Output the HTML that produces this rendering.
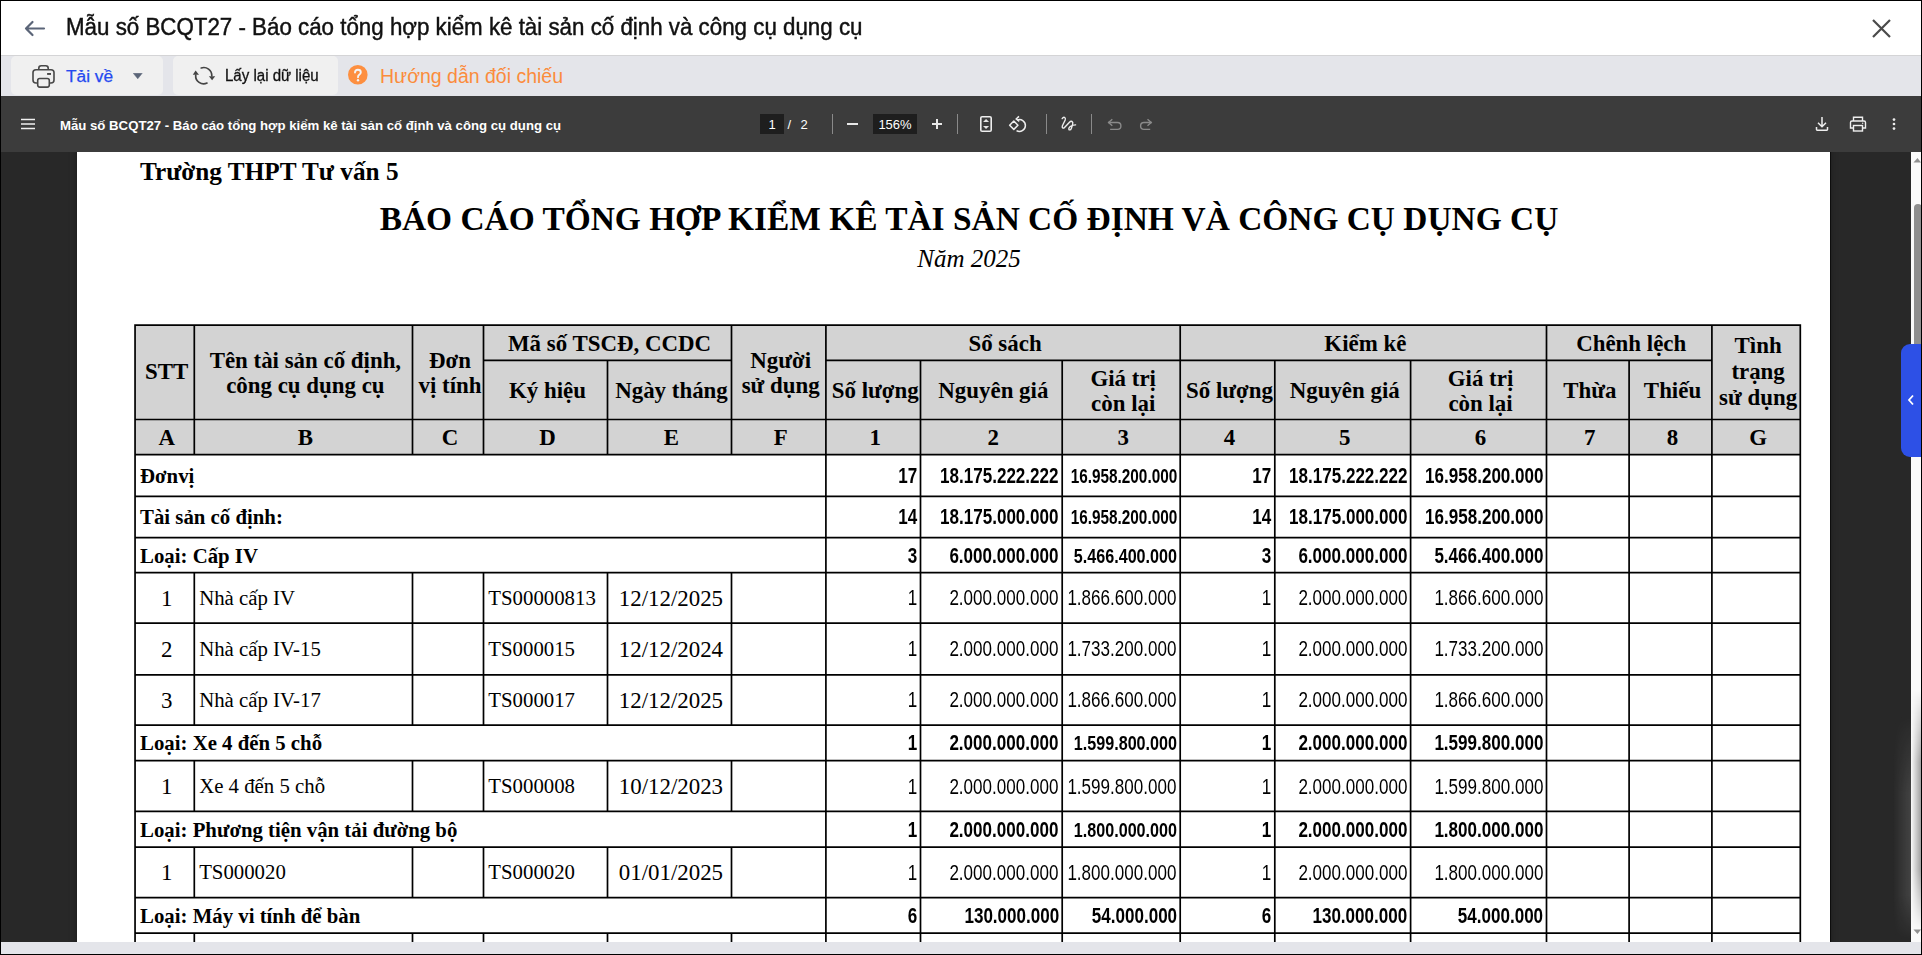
<!DOCTYPE html><html><head><meta charset="utf-8"><style>
*{margin:0;padding:0;box-sizing:border-box}
html,body{width:1922px;height:955px;overflow:hidden;background:#000}
body{position:relative;font-family:'Liberation Sans', sans-serif}
.abs{position:absolute}
.ln{position:absolute;background:#1a1a1a}
.c{position:absolute;display:flex;align-items:center;white-space:nowrap;overflow:visible;color:#000}
.hb{font:bold 22.9px/25.4px 'Liberation Serif', serif}
.rb{font:bold 20.8px/24px 'Liberation Serif', serif}
.rr{font:20.8px/24px 'Liberation Serif', serif}
.rd{font:22.9px/24px 'Liberation Serif', serif}
.n{display:inline-block;font-family:'Liberation Sans', sans-serif;transform:scaleX(0.782);transform-origin:right center}
.nb{font-weight:bold}
</style></head><body>
<div class="abs" style="left:1px;top:1px;width:1920px;height:54px;background:#fff"></div>
<div class="abs" style="left:1px;top:55px;width:1920px;height:41px;background:#e4e5ea;border-top:1px solid #d4d4d6"></div>
<div class="abs" style="left:1px;top:96px;width:1920px;height:56px;background:#3c3c3c"></div>
<div class="abs" style="left:1px;top:152px;width:1910px;height:790px;background:#282828;overflow:hidden" id="viewer">
<div class="abs" style="left:76px;top:-10px;width:1753px;height:810px;background:#fff;box-shadow:0 0 1px 0.5px rgba(0,0,0,0.6),0 0 7px 1px rgba(0,0,0,0.25)"></div>
</div>
<div class="abs" style="left:1911px;top:152px;width:10px;height:790px;background:#fafafa"></div>
<div class="abs" style="left:1px;top:942px;width:1920px;height:12px;background:#e4e5ea"></div>
<svg class="abs" style="left:22px;top:18px" width="24" height="20" viewBox="0 0 24 20"><path d="M22 10.5H4 M10.5 4L4 10.5L10.5 17" fill="none" stroke="#5b6578" stroke-width="2.2" stroke-linecap="round" stroke-linejoin="round"/></svg>
<div class="abs" style="left:66px;top:12.8px;font:23.5px/28px 'Liberation Sans', sans-serif;color:#111;white-space:nowrap;transform:scaleX(0.95);transform-origin:left top;-webkit-text-stroke:0.45px #111">Mẫu số BCQT27 - Báo cáo tổng hợp kiểm kê tài sản cố định và công cụ dụng cụ</div>
<svg class="abs" style="left:1870px;top:17px" width="22" height="22" viewBox="0 0 22 22"><path d="M3 3L20 20M20 3L3 20" stroke="#4a4a4a" stroke-width="2.2"/></svg>
<div class="abs" style="left:11px;top:56px;width:152px;height:39px;background:#f0f0f0;border-radius:5px"></div>
<div class="abs" style="left:173px;top:56px;width:165px;height:39px;background:#f0f0f0;border-radius:5px"></div>
<svg class="abs" style="left:26px;top:60px" width="40" height="32" viewBox="0 0 40 32"><g fill="none" stroke="#484848" stroke-width="1.6" stroke-linejoin="round"><path d="M12.8 9.6V8.2Q12.8 5.8 15.2 5.8H19.8Q22.2 5.8 22.2 8.2V9.6"/><path d="M11.6 23H10Q7 23 7 20V12.6Q7 9.7 10 9.7H25Q28 9.7 28 12.6V20Q28 23 25 23H23.4"/><rect x="11.7" y="18.5" width="11.6" height="8.6" rx="2"/></g><rect x="21.1" y="13" width="3.9" height="1.9" fill="#484848"/></svg>
<div class="abs" style="left:66px;top:64.6px;font:17.3px/22px 'Liberation Sans', sans-serif;color:#2449ef;white-space:nowrap;-webkit-text-stroke:0.25px #2449ef">Tải về</div>
<svg class="abs" style="left:133px;top:73px" width="10" height="7" viewBox="0 0 10 7"><path d="M0.3 0.3H9.2L4.75 5.8Z" fill="#5b6578" stroke="#5b6578" stroke-width="0.5" stroke-linejoin="round"/></svg>
<svg class="abs" style="left:186px;top:60px" width="40" height="32" viewBox="0 0 40 32"><g fill="none" stroke="#444" stroke-width="1.7" stroke-linecap="round"><path d="M15.2 8.0A8 8 0 0 1 25.8 15.8"/><path d="M9.7 15.2A8 8 0 0 0 21 23.1"/></g><path d="M22.9 16.2H29.2L26.1 20.3Z" fill="#444"/><path d="M6.8 14.8H13L9.6 10.6Z" fill="#444"/></svg>
<div class="abs" style="left:225px;top:65.5px;font:16px/20px 'Liberation Sans', sans-serif;color:#111;white-space:nowrap;transform:scaleX(0.94);transform-origin:left top;-webkit-text-stroke:0.3px #111">Lấy lại dữ liệu</div>
<svg class="abs" style="left:348px;top:65px" width="20" height="20" viewBox="0 0 20 20"><circle cx="9.8" cy="9.8" r="9.8" fill="#fd8f40"/><path d="M7 7.6Q7 4.8 9.9 4.8Q12.8 4.8 12.8 7.3Q12.8 8.8 11.2 9.8Q10 10.6 10 12.2" fill="none" stroke="#f4f4f4" stroke-width="1.9" stroke-linecap="round"/><circle cx="10" cy="15.2" r="1.2" fill="#f4f4f4"/></svg>
<div class="abs" style="left:380px;top:63.8px;font:19.5px/24px 'Liberation Sans', sans-serif;color:#fb8c3c;white-space:nowrap">Hướng dẫn đối chiếu</div>
<svg class="abs" style="left:20px;top:118px" width="16" height="12" viewBox="0 0 16 12"><path d="M1 1.5H15M1 6H15M1 10.5H15" stroke="#f0f0f0" stroke-width="1.6"/></svg>
<div class="abs" style="left:60px;top:117px;font:bold 13.2px/18px 'Liberation Sans', sans-serif;color:#fff;white-space:nowrap">Mẫu số BCQT27 - Báo cáo tổng hợp kiểm kê tài sản cố định và công cụ dụng cụ</div>
<div class="abs" style="left:760px;top:114px;width:24px;height:20px;background:#1e1e1e"></div>
<div class="abs" style="left:760px;top:116px;width:24px;font:13px/18px 'Liberation Sans', sans-serif;color:#fff;text-align:center">1</div>
<div class="abs" style="left:787.5px;top:116px;font:13px/18px 'Liberation Sans', sans-serif;color:#fff;white-space:nowrap">/</div>
<div class="abs" style="left:800.5px;top:116px;font:13px/18px 'Liberation Sans', sans-serif;color:#fff;white-space:nowrap">2</div>
<div class="abs" style="left:832px;top:114px;width:1px;height:20px;background:#8a8a8a"></div>
<div class="abs" style="left:847px;top:123px;width:11px;height:2px;background:#e8e8e8"></div>
<div class="abs" style="left:873px;top:114px;width:44px;height:20px;background:#1e1e1e"></div>
<div class="abs" style="left:873px;top:116px;width:44px;font:13px/18px 'Liberation Sans', sans-serif;color:#fff;text-align:center">156%</div>
<svg class="abs" style="left:931px;top:118px" width="12" height="12" viewBox="0 0 12 12"><path d="M6 1V11M1 6H11" stroke="#e8e8e8" stroke-width="2"/></svg>
<div class="abs" style="left:957px;top:114px;width:1px;height:20px;background:#8a8a8a"></div>
<svg class="abs" style="left:979px;top:115px" width="14" height="18" viewBox="0 0 14 18"><rect x="1.8" y="1.75" width="10.4" height="14.5" rx="1.3" fill="none" stroke="#eee" stroke-width="1.6"/><path d="M4 7.05L7.05 4.1L10.1 7.05Z M4 11L10.1 11L7.05 13.9Z" fill="#e6e6e6"/></svg>
<svg class="abs" style="left:1008px;top:115px" width="20" height="19" viewBox="0 0 20 19"><path d="M1.65 10.2L5.8 6.05L9.95 10.2L5.8 14.35Z" fill="none" stroke="#eee" stroke-width="1.5" stroke-linejoin="round"/><path d="M8.55 15.6A5.9 5.9 0 1 0 9.0 5.15" fill="none" stroke="#eee" stroke-width="1.5"/><path d="M11 1.4L8.1 4.0L11.3 6.3" fill="none" stroke="#eee" stroke-width="1.5" stroke-linejoin="round"/></svg>
<div class="abs" style="left:1046px;top:114px;width:1px;height:20px;background:#8a8a8a"></div>
<svg class="abs" style="left:1056px;top:112px" width="24" height="24" viewBox="0 0 24 24"><path d="M6.2 6.6C7.5 4.5 10 5 9.2 8L6.4 13.8C5.6 15.8 7.2 16.8 8.5 15.5L13.5 10.2C15 8.6 17.6 9.2 16.6 12.4L15.4 16.2C14.6 18.6 12.2 18.4 13 16C13.6 14.4 16.5 13.2 19.6 12.9" fill="none" stroke="#eee" stroke-width="1.4" stroke-linecap="round" stroke-linejoin="round"/></svg>
<div class="abs" style="left:1091px;top:114px;width:1px;height:20px;background:#8a8a8a"></div>
<svg class="abs" style="left:1106px;top:117px" width="16" height="14" viewBox="0 0 16 14"><path d="M2 5.55H11.5A3.4 3.4 0 0 1 11.5 12.35H4.1" fill="none" stroke="#8a8a8a" stroke-width="1.4"/><path d="M6.3 2.3L2.6 5.55L6.3 8.8" fill="none" stroke="#8a8a8a" stroke-width="1.4"/></svg>
<svg class="abs" style="left:1138px;top:117px" width="16" height="14" viewBox="0 0 16 14"><path d="M13.8 5.55H6A3.4 3.4 0 0 0 6 12.35H12.2" fill="none" stroke="#8a8a8a" stroke-width="1.4"/><path d="M9.5 2.3L13.2 5.55L9.5 8.8" fill="none" stroke="#8a8a8a" stroke-width="1.4"/></svg>
<svg class="abs" style="left:1814px;top:116px" width="16" height="16" viewBox="0 0 16 16"><path d="M8 1V10.5M4 6.8L8 10.8L12 6.8" fill="none" stroke="#eee" stroke-width="1.5"/><path d="M2.5 11V13.6Q2.5 14.3 3.2 14.3H12.8Q13.5 14.3 13.5 13.6V11" fill="none" stroke="#eee" stroke-width="1.5"/></svg>
<svg class="abs" style="left:1849px;top:116px" width="18" height="16" viewBox="0 0 18 16"><path d="M4.5 5V1.2H13.5V5" fill="none" stroke="#eee" stroke-width="1.4"/><path d="M4.5 12H1.5V6.5Q1.5 5 3 5H15Q16.5 5 16.5 6.5V12H13.5" fill="none" stroke="#eee" stroke-width="1.4"/><rect x="4.5" y="9.5" width="9" height="5.5" fill="none" stroke="#eee" stroke-width="1.4"/><circle cx="13.7" cy="7.3" r="0.7" fill="#eee"/></svg>
<svg class="abs" style="left:1891px;top:116px" width="6" height="16" viewBox="0 0 6 16"><circle cx="3" cy="3.6" r="1.35" fill="#eee"/><circle cx="3" cy="8" r="1.35" fill="#eee"/><circle cx="3" cy="12.6" r="1.35" fill="#eee"/></svg>
<svg class="abs" style="left:1913px;top:157px" width="8" height="6" viewBox="0 0 8 6"><path d="M0.5 5.5L4.5 1L8 5.5Z" fill="#8f8f8f"/></svg>
<div class="abs" style="left:1914px;top:204px;width:8px;height:200px;background:#8f8f8f;border-radius:4px 4px 0 0"></div>
<div class="abs" style="left:1911px;top:690px;width:10px;height:240px;background:linear-gradient(to right,#fafafa,#a0a0a0);-webkit-mask-image:linear-gradient(to bottom,transparent,#000 30%,#000 75%,transparent)"></div>
<div class="abs" style="left:1893px;top:715px;width:18px;height:225px;background:linear-gradient(to right,rgba(255,255,255,0),rgba(255,255,255,0.13));-webkit-mask-image:linear-gradient(to bottom,transparent,#000 35%,#000 80%,transparent)"></div>
<svg class="abs" style="left:1913px;top:929px" width="8" height="6" viewBox="0 0 8 6"><path d="M0.5 0.5L4.5 5L8 0.5Z" fill="#8f8f8f"/></svg>
<div class="abs" style="left:1901px;top:344px;width:21px;height:113px;background:#2d50e6;border-radius:9px 0 0 9px"></div>
<svg class="abs" style="left:1906px;top:394px" width="10" height="12" viewBox="0 0 10 12"><path d="M7 1.5L3 6L7 10.5" fill="none" stroke="#fff" stroke-width="1.8"/></svg>
<div class="abs" style="left:0;top:0;width:1922px;height:942px;overflow:hidden;pointer-events:none">
<div class="abs" style="left:77px;top:152px;width:1753px;height:790px;overflow:hidden">
<div class="abs" style="left:-77px;top:-152px;width:1922px;height:1100px">
<div class="abs" style="left:140px;top:156px;font:bold 25.25px/30px 'Liberation Serif', serif;white-space:nowrap">Trường THPT Tư vấn 5</div>
<div class="abs" style="left:169px;top:199px;width:1600px;text-align:center;font:bold 33.42px/40px 'Liberation Serif', serif;white-space:nowrap">BÁO CÁO TỔNG HỢP KIỂM KÊ TÀI SẢN CỐ ĐỊNH VÀ CÔNG CỤ DỤNG CỤ</div>
<div class="abs" style="left:769px;top:243.5px;width:400px;text-align:center;font:italic 25px/30px 'Liberation Serif', serif;white-space:nowrap">Năm 2025</div>
<div class="abs" style="left:135.05px;top:325.1px;width:1665.25px;height:129.5px;background:#d3d3d3"></div>
<div class="c hb" style="left:135.9px;top:325.45000000000005px;width:57.55000000000001px;height:92.69999999999993px;justify-content:center;padding:0 4px 0 8px;text-align:center;">STT</div>
<div class="c hb" style="left:195.15px;top:326.95000000000005px;width:216.49999999999997px;height:92.69999999999993px;justify-content:center;padding:0 4px 0 8px;text-align:center;">Tên tài sản cố định,<br>công cụ dụng cụ</div>
<div class="c hb" style="left:413.35px;top:326.95000000000005px;width:69.29999999999995px;height:92.69999999999993px;justify-content:center;padding:0 0px 0 4px;text-align:center;">Đơn<br>vị tính</div>
<div class="c hb" style="left:484.35px;top:326.95000000000005px;width:246.29999999999995px;height:33.59999999999991px;justify-content:center;padding:0 4px 0 8px;text-align:center;">Mã số TSCĐ, CCDC</div>
<div class="c hb" style="left:484.35px;top:362.25px;width:122.29999999999995px;height:57.39999999999998px;justify-content:center;padding:0 4px 0 8px;text-align:center;">Ký hiệu</div>
<div class="c hb" style="left:608.35px;top:362.25px;width:122.29999999999995px;height:57.39999999999998px;justify-content:center;padding:0 0px 0 4px;text-align:center;">Ngày tháng</div>
<div class="c hb" style="left:732.35px;top:326.95000000000005px;width:92.69999999999993px;height:92.69999999999993px;justify-content:center;padding:0 0px 0 4px;text-align:center;">Người<br>sử dụng</div>
<div class="c hb" style="left:826.75px;top:326.95000000000005px;width:352.60000000000014px;height:33.59999999999991px;justify-content:center;padding:0 4px 0 8px;text-align:center;">Sổ sách</div>
<div class="c hb" style="left:826.75px;top:362.25px;width:92.89999999999998px;height:57.39999999999998px;justify-content:center;padding:0 0px 0 4px;text-align:center;">Số lượng</div>
<div class="c hb" style="left:921.35px;top:362.25px;width:140.0000000000001px;height:57.39999999999998px;justify-content:center;padding:0 4px 0 8px;text-align:center;">Nguyên giá</div>
<div class="c hb" style="left:1063.05px;top:362.25px;width:116.30000000000018px;height:57.39999999999998px;justify-content:center;padding:0 4px 0 8px;text-align:center;">Giá trị<br>còn lại</div>
<div class="c hb" style="left:1181.05px;top:326.95000000000005px;width:364.60000000000014px;height:33.59999999999991px;justify-content:center;padding:0 4px 0 8px;text-align:center;">Kiểm kê</div>
<div class="c hb" style="left:1181.05px;top:362.25px;width:92.90000000000009px;height:57.39999999999998px;justify-content:center;padding:0 0px 0 4px;text-align:center;">Số lượng</div>
<div class="c hb" style="left:1275.6499999999999px;top:362.25px;width:134.10000000000014px;height:57.39999999999998px;justify-content:center;padding:0 4px 0 8px;text-align:center;">Nguyên giá</div>
<div class="c hb" style="left:1411.4499999999998px;top:362.25px;width:134.20000000000027px;height:57.39999999999998px;justify-content:center;padding:0 4px 0 8px;text-align:center;">Giá trị<br>còn lại</div>
<div class="c hb" style="left:1547.35px;top:326.95000000000005px;width:163.70000000000027px;height:33.59999999999991px;justify-content:center;padding:0 4px 0 8px;text-align:center;">Chênh lệch</div>
<div class="c hb" style="left:1547.35px;top:362.25px;width:80.90000000000009px;height:57.39999999999998px;justify-content:center;padding:0 4px 0 8px;text-align:center;">Thừa</div>
<div class="c hb" style="left:1629.9499999999998px;top:362.25px;width:81.10000000000036px;height:57.39999999999998px;justify-content:center;padding:0 4px 0 8px;text-align:center;">Thiếu</div>
<div class="c hb" style="left:1712.75px;top:325.95000000000005px;width:86.70000000000005px;height:92.69999999999993px;justify-content:center;padding:0 0px 0 4px;text-align:center;line-height:26.4px">Tình<br>trạng<br>sử dụng</div>
<div class="c hb" style="left:135.9px;top:421.35px;width:57.55000000000001px;height:33.39999999999998px;justify-content:center;padding:0 4px 0 8px;text-align:center;">A</div>
<div class="c hb" style="left:195.15px;top:421.35px;width:216.49999999999997px;height:33.39999999999998px;justify-content:center;padding:0 4px 0 8px;text-align:center;">B</div>
<div class="c hb" style="left:413.35px;top:421.35px;width:69.29999999999995px;height:33.39999999999998px;justify-content:center;padding:0 4px 0 8px;text-align:center;">C</div>
<div class="c hb" style="left:484.35px;top:421.35px;width:122.29999999999995px;height:33.39999999999998px;justify-content:center;padding:0 4px 0 8px;text-align:center;">D</div>
<div class="c hb" style="left:608.35px;top:421.35px;width:122.29999999999995px;height:33.39999999999998px;justify-content:center;padding:0 4px 0 8px;text-align:center;">E</div>
<div class="c hb" style="left:732.35px;top:421.35px;width:92.69999999999993px;height:33.39999999999998px;justify-content:center;padding:0 4px 0 8px;text-align:center;">F</div>
<div class="c hb" style="left:826.75px;top:421.35px;width:92.89999999999998px;height:33.39999999999998px;justify-content:center;padding:0 4px 0 8px;text-align:center;">1</div>
<div class="c hb" style="left:921.35px;top:421.35px;width:140.0000000000001px;height:33.39999999999998px;justify-content:center;padding:0 4px 0 8px;text-align:center;">2</div>
<div class="c hb" style="left:1063.05px;top:421.35px;width:116.30000000000018px;height:33.39999999999998px;justify-content:center;padding:0 4px 0 8px;text-align:center;">3</div>
<div class="c hb" style="left:1181.05px;top:421.35px;width:92.90000000000009px;height:33.39999999999998px;justify-content:center;padding:0 4px 0 8px;text-align:center;">4</div>
<div class="c hb" style="left:1275.6499999999999px;top:421.35px;width:134.10000000000014px;height:33.39999999999998px;justify-content:center;padding:0 4px 0 8px;text-align:center;">5</div>
<div class="c hb" style="left:1411.4499999999998px;top:421.35px;width:134.20000000000027px;height:33.39999999999998px;justify-content:center;padding:0 4px 0 8px;text-align:center;">6</div>
<div class="c hb" style="left:1547.35px;top:421.35px;width:80.90000000000009px;height:33.39999999999998px;justify-content:center;padding:0 4px 0 8px;text-align:center;">7</div>
<div class="c hb" style="left:1629.9499999999998px;top:421.35px;width:81.10000000000036px;height:33.39999999999998px;justify-content:center;padding:0 4px 0 8px;text-align:center;">8</div>
<div class="c hb" style="left:1712.75px;top:421.35px;width:86.70000000000005px;height:33.39999999999998px;justify-content:center;padding:0 4px 0 8px;text-align:center;">G</div>
<div class="c rb" style="left:135.9px;top:455.95000000000005px;width:689.15px;height:39.99999999999994px;justify-content:flex-start;padding:0 4.2px 0 4.2px;text-align:left;">Đơnvị</div>
<div class="c rb" style="left:826.75px;top:455.95000000000005px;width:92.89999999999998px;height:39.99999999999994px;justify-content:flex-end;padding:0 2.5px 0 2.5px;text-align:right;"><span class="n nb" style="font-size:21.80px">17</span></div>
<div class="c rb" style="left:921.35px;top:455.95000000000005px;width:140.0000000000001px;height:39.99999999999994px;justify-content:flex-end;padding:0 2.5px 0 2.5px;text-align:right;"><span class="n nb" style="font-size:21.80px">18.175.222.222</span></div>
<div class="c rb" style="left:1063.05px;top:455.95000000000005px;width:116.30000000000018px;height:39.99999999999994px;justify-content:flex-end;padding:0 2.5px 0 2.5px;text-align:right;"><span class="n nb" style="font-size:19.60px">16.958.200.000</span></div>
<div class="c rb" style="left:1181.05px;top:455.95000000000005px;width:92.90000000000009px;height:39.99999999999994px;justify-content:flex-end;padding:0 2.5px 0 2.5px;text-align:right;"><span class="n nb" style="font-size:21.80px">17</span></div>
<div class="c rb" style="left:1275.6499999999999px;top:455.95000000000005px;width:134.10000000000014px;height:39.99999999999994px;justify-content:flex-end;padding:0 2.5px 0 2.5px;text-align:right;"><span class="n nb" style="font-size:21.80px">18.175.222.222</span></div>
<div class="c rb" style="left:1411.4499999999998px;top:455.95000000000005px;width:134.20000000000027px;height:39.99999999999994px;justify-content:flex-end;padding:0 2.5px 0 2.5px;text-align:right;"><span class="n nb" style="font-size:21.80px">16.958.200.000</span></div>
<div class="c rb" style="left:135.9px;top:497.65000000000003px;width:689.15px;height:39.599999999999966px;justify-content:flex-start;padding:0 4.2px 0 4.2px;text-align:left;">Tài sản cố định:</div>
<div class="c rb" style="left:826.75px;top:497.65000000000003px;width:92.89999999999998px;height:39.599999999999966px;justify-content:flex-end;padding:0 2.5px 0 2.5px;text-align:right;"><span class="n nb" style="font-size:21.80px">14</span></div>
<div class="c rb" style="left:921.35px;top:497.65000000000003px;width:140.0000000000001px;height:39.599999999999966px;justify-content:flex-end;padding:0 2.5px 0 2.5px;text-align:right;"><span class="n nb" style="font-size:21.80px">18.175.000.000</span></div>
<div class="c rb" style="left:1063.05px;top:497.65000000000003px;width:116.30000000000018px;height:39.599999999999966px;justify-content:flex-end;padding:0 2.5px 0 2.5px;text-align:right;"><span class="n nb" style="font-size:19.60px">16.958.200.000</span></div>
<div class="c rb" style="left:1181.05px;top:497.65000000000003px;width:92.90000000000009px;height:39.599999999999966px;justify-content:flex-end;padding:0 2.5px 0 2.5px;text-align:right;"><span class="n nb" style="font-size:21.80px">14</span></div>
<div class="c rb" style="left:1275.6499999999999px;top:497.65000000000003px;width:134.10000000000014px;height:39.599999999999966px;justify-content:flex-end;padding:0 2.5px 0 2.5px;text-align:right;"><span class="n nb" style="font-size:21.80px">18.175.000.000</span></div>
<div class="c rb" style="left:1411.4499999999998px;top:497.65000000000003px;width:134.20000000000027px;height:39.599999999999966px;justify-content:flex-end;padding:0 2.5px 0 2.5px;text-align:right;"><span class="n nb" style="font-size:21.80px">16.958.200.000</span></div>
<div class="c rb" style="left:135.9px;top:538.95px;width:689.15px;height:33.39999999999998px;justify-content:flex-start;padding:0 4.2px 0 4.2px;text-align:left;">Loại: Cấp IV</div>
<div class="c rb" style="left:826.75px;top:538.95px;width:92.89999999999998px;height:33.39999999999998px;justify-content:flex-end;padding:0 2.5px 0 2.5px;text-align:right;"><span class="n nb" style="font-size:21.80px">3</span></div>
<div class="c rb" style="left:921.35px;top:538.95px;width:140.0000000000001px;height:33.39999999999998px;justify-content:flex-end;padding:0 2.5px 0 2.5px;text-align:right;"><span class="n nb" style="font-size:21.80px">6.000.000.000</span></div>
<div class="c rb" style="left:1063.05px;top:538.95px;width:116.30000000000018px;height:33.39999999999998px;justify-content:flex-end;padding:0 2.5px 0 2.5px;text-align:right;"><span class="n nb" style="font-size:20.65px">5.466.400.000</span></div>
<div class="c rb" style="left:1181.05px;top:538.95px;width:92.90000000000009px;height:33.39999999999998px;justify-content:flex-end;padding:0 2.5px 0 2.5px;text-align:right;"><span class="n nb" style="font-size:21.80px">3</span></div>
<div class="c rb" style="left:1275.6499999999999px;top:538.95px;width:134.10000000000014px;height:33.39999999999998px;justify-content:flex-end;padding:0 2.5px 0 2.5px;text-align:right;"><span class="n nb" style="font-size:21.80px">6.000.000.000</span></div>
<div class="c rb" style="left:1411.4499999999998px;top:538.95px;width:134.20000000000027px;height:33.39999999999998px;justify-content:flex-end;padding:0 2.5px 0 2.5px;text-align:right;"><span class="n nb" style="font-size:21.80px">5.466.400.000</span></div>
<div class="c rd" style="left:135.9px;top:574.5500000000001px;width:57.55000000000001px;height:48.799999999999955px;justify-content:center;padding:0 4px 0 8px;text-align:center;">1</div>
<div class="c rr" style="left:195.15px;top:573.5500000000001px;width:216.49999999999997px;height:48.799999999999955px;justify-content:flex-start;padding:0 4px 0 4px;text-align:left;">Nhà cấp IV</div>
<div class="c rr" style="left:484.35px;top:573.5500000000001px;width:122.29999999999995px;height:48.799999999999955px;justify-content:flex-start;padding:0 4px 0 4px;text-align:left;">TS00000813</div>
<div class="c rd" style="left:608.35px;top:574.5500000000001px;width:122.29999999999995px;height:48.799999999999955px;justify-content:center;padding:0 0px 0 2.8px;text-align:center;">12/12/2025</div>
<div class="c rr" style="left:826.75px;top:574.0500000000001px;width:92.89999999999998px;height:48.799999999999955px;justify-content:flex-end;padding:0 2.5px 0 2.5px;text-align:right;"><span class="n" style="font-size:21.80px">1</span></div>
<div class="c rr" style="left:921.35px;top:574.0500000000001px;width:140.0000000000001px;height:48.799999999999955px;justify-content:flex-end;padding:0 2.5px 0 2.5px;text-align:right;"><span class="n" style="font-size:21.80px">2.000.000.000</span></div>
<div class="c rr" style="left:1063.05px;top:574.0500000000001px;width:116.30000000000018px;height:48.799999999999955px;justify-content:flex-end;padding:0 2.5px 0 2.5px;text-align:right;"><span class="n" style="font-size:21.80px">1.866.600.000</span></div>
<div class="c rr" style="left:1181.05px;top:574.0500000000001px;width:92.90000000000009px;height:48.799999999999955px;justify-content:flex-end;padding:0 2.5px 0 2.5px;text-align:right;"><span class="n" style="font-size:21.80px">1</span></div>
<div class="c rr" style="left:1275.6499999999999px;top:574.0500000000001px;width:134.10000000000014px;height:48.799999999999955px;justify-content:flex-end;padding:0 2.5px 0 2.5px;text-align:right;"><span class="n" style="font-size:21.80px">2.000.000.000</span></div>
<div class="c rr" style="left:1411.4499999999998px;top:574.0500000000001px;width:134.20000000000027px;height:48.799999999999955px;justify-content:flex-end;padding:0 2.5px 0 2.5px;text-align:right;"><span class="n" style="font-size:21.80px">1.866.600.000</span></div>
<div class="c rd" style="left:135.9px;top:625.0500000000001px;width:57.55000000000001px;height:49.899999999999864px;justify-content:center;padding:0 4px 0 8px;text-align:center;">2</div>
<div class="c rr" style="left:195.15px;top:624.0500000000001px;width:216.49999999999997px;height:49.899999999999864px;justify-content:flex-start;padding:0 4px 0 4px;text-align:left;">Nhà cấp IV-15</div>
<div class="c rr" style="left:484.35px;top:624.0500000000001px;width:122.29999999999995px;height:49.899999999999864px;justify-content:flex-start;padding:0 4px 0 4px;text-align:left;">TS000015</div>
<div class="c rd" style="left:608.35px;top:625.0500000000001px;width:122.29999999999995px;height:49.899999999999864px;justify-content:center;padding:0 0px 0 2.8px;text-align:center;">12/12/2024</div>
<div class="c rr" style="left:826.75px;top:624.5500000000001px;width:92.89999999999998px;height:49.899999999999864px;justify-content:flex-end;padding:0 2.5px 0 2.5px;text-align:right;"><span class="n" style="font-size:21.80px">1</span></div>
<div class="c rr" style="left:921.35px;top:624.5500000000001px;width:140.0000000000001px;height:49.899999999999864px;justify-content:flex-end;padding:0 2.5px 0 2.5px;text-align:right;"><span class="n" style="font-size:21.80px">2.000.000.000</span></div>
<div class="c rr" style="left:1063.05px;top:624.5500000000001px;width:116.30000000000018px;height:49.899999999999864px;justify-content:flex-end;padding:0 2.5px 0 2.5px;text-align:right;"><span class="n" style="font-size:21.80px">1.733.200.000</span></div>
<div class="c rr" style="left:1181.05px;top:624.5500000000001px;width:92.90000000000009px;height:49.899999999999864px;justify-content:flex-end;padding:0 2.5px 0 2.5px;text-align:right;"><span class="n" style="font-size:21.80px">1</span></div>
<div class="c rr" style="left:1275.6499999999999px;top:624.5500000000001px;width:134.10000000000014px;height:49.899999999999864px;justify-content:flex-end;padding:0 2.5px 0 2.5px;text-align:right;"><span class="n" style="font-size:21.80px">2.000.000.000</span></div>
<div class="c rr" style="left:1411.4499999999998px;top:624.5500000000001px;width:134.20000000000027px;height:49.899999999999864px;justify-content:flex-end;padding:0 2.5px 0 2.5px;text-align:right;"><span class="n" style="font-size:21.80px">1.733.200.000</span></div>
<div class="c rd" style="left:135.9px;top:676.65px;width:57.55000000000001px;height:48.700000000000045px;justify-content:center;padding:0 4px 0 8px;text-align:center;">3</div>
<div class="c rr" style="left:195.15px;top:675.65px;width:216.49999999999997px;height:48.700000000000045px;justify-content:flex-start;padding:0 4px 0 4px;text-align:left;">Nhà cấp IV-17</div>
<div class="c rr" style="left:484.35px;top:675.65px;width:122.29999999999995px;height:48.700000000000045px;justify-content:flex-start;padding:0 4px 0 4px;text-align:left;">TS000017</div>
<div class="c rd" style="left:608.35px;top:676.65px;width:122.29999999999995px;height:48.700000000000045px;justify-content:center;padding:0 0px 0 2.8px;text-align:center;">12/12/2025</div>
<div class="c rr" style="left:826.75px;top:676.15px;width:92.89999999999998px;height:48.700000000000045px;justify-content:flex-end;padding:0 2.5px 0 2.5px;text-align:right;"><span class="n" style="font-size:21.80px">1</span></div>
<div class="c rr" style="left:921.35px;top:676.15px;width:140.0000000000001px;height:48.700000000000045px;justify-content:flex-end;padding:0 2.5px 0 2.5px;text-align:right;"><span class="n" style="font-size:21.80px">2.000.000.000</span></div>
<div class="c rr" style="left:1063.05px;top:676.15px;width:116.30000000000018px;height:48.700000000000045px;justify-content:flex-end;padding:0 2.5px 0 2.5px;text-align:right;"><span class="n" style="font-size:21.80px">1.866.600.000</span></div>
<div class="c rr" style="left:1181.05px;top:676.15px;width:92.90000000000009px;height:48.700000000000045px;justify-content:flex-end;padding:0 2.5px 0 2.5px;text-align:right;"><span class="n" style="font-size:21.80px">1</span></div>
<div class="c rr" style="left:1275.6499999999999px;top:676.15px;width:134.10000000000014px;height:48.700000000000045px;justify-content:flex-end;padding:0 2.5px 0 2.5px;text-align:right;"><span class="n" style="font-size:21.80px">2.000.000.000</span></div>
<div class="c rr" style="left:1411.4499999999998px;top:676.15px;width:134.20000000000027px;height:48.700000000000045px;justify-content:flex-end;padding:0 2.5px 0 2.5px;text-align:right;"><span class="n" style="font-size:21.80px">1.866.600.000</span></div>
<div class="c rb" style="left:135.9px;top:726.5500000000001px;width:689.15px;height:33.799999999999955px;justify-content:flex-start;padding:0 4.2px 0 4.2px;text-align:left;">Loại: Xe 4 đến 5 chỗ</div>
<div class="c rb" style="left:826.75px;top:726.5500000000001px;width:92.89999999999998px;height:33.799999999999955px;justify-content:flex-end;padding:0 2.5px 0 2.5px;text-align:right;"><span class="n nb" style="font-size:21.80px">1</span></div>
<div class="c rb" style="left:921.35px;top:726.5500000000001px;width:140.0000000000001px;height:33.799999999999955px;justify-content:flex-end;padding:0 2.5px 0 2.5px;text-align:right;"><span class="n nb" style="font-size:21.80px">2.000.000.000</span></div>
<div class="c rb" style="left:1063.05px;top:726.5500000000001px;width:116.30000000000018px;height:33.799999999999955px;justify-content:flex-end;padding:0 2.5px 0 2.5px;text-align:right;"><span class="n nb" style="font-size:20.65px">1.599.800.000</span></div>
<div class="c rb" style="left:1181.05px;top:726.5500000000001px;width:92.90000000000009px;height:33.799999999999955px;justify-content:flex-end;padding:0 2.5px 0 2.5px;text-align:right;"><span class="n nb" style="font-size:21.80px">1</span></div>
<div class="c rb" style="left:1275.6499999999999px;top:726.5500000000001px;width:134.10000000000014px;height:33.799999999999955px;justify-content:flex-end;padding:0 2.5px 0 2.5px;text-align:right;"><span class="n nb" style="font-size:21.80px">2.000.000.000</span></div>
<div class="c rb" style="left:1411.4499999999998px;top:726.5500000000001px;width:134.20000000000027px;height:33.799999999999955px;justify-content:flex-end;padding:0 2.5px 0 2.5px;text-align:right;"><span class="n nb" style="font-size:21.80px">1.599.800.000</span></div>
<div class="c rd" style="left:135.9px;top:762.5500000000001px;width:57.55000000000001px;height:48.999999999999886px;justify-content:center;padding:0 4px 0 8px;text-align:center;">1</div>
<div class="c rr" style="left:195.15px;top:761.5500000000001px;width:216.49999999999997px;height:48.999999999999886px;justify-content:flex-start;padding:0 4px 0 4px;text-align:left;">Xe 4 đến 5 chỗ</div>
<div class="c rr" style="left:484.35px;top:761.5500000000001px;width:122.29999999999995px;height:48.999999999999886px;justify-content:flex-start;padding:0 4px 0 4px;text-align:left;">TS000008</div>
<div class="c rd" style="left:608.35px;top:762.5500000000001px;width:122.29999999999995px;height:48.999999999999886px;justify-content:center;padding:0 0px 0 2.8px;text-align:center;">10/12/2023</div>
<div class="c rr" style="left:826.75px;top:762.0500000000001px;width:92.89999999999998px;height:48.999999999999886px;justify-content:flex-end;padding:0 2.5px 0 2.5px;text-align:right;"><span class="n" style="font-size:21.80px">1</span></div>
<div class="c rr" style="left:921.35px;top:762.0500000000001px;width:140.0000000000001px;height:48.999999999999886px;justify-content:flex-end;padding:0 2.5px 0 2.5px;text-align:right;"><span class="n" style="font-size:21.80px">2.000.000.000</span></div>
<div class="c rr" style="left:1063.05px;top:762.0500000000001px;width:116.30000000000018px;height:48.999999999999886px;justify-content:flex-end;padding:0 2.5px 0 2.5px;text-align:right;"><span class="n" style="font-size:21.80px">1.599.800.000</span></div>
<div class="c rr" style="left:1181.05px;top:762.0500000000001px;width:92.90000000000009px;height:48.999999999999886px;justify-content:flex-end;padding:0 2.5px 0 2.5px;text-align:right;"><span class="n" style="font-size:21.80px">1</span></div>
<div class="c rr" style="left:1275.6499999999999px;top:762.0500000000001px;width:134.10000000000014px;height:48.999999999999886px;justify-content:flex-end;padding:0 2.5px 0 2.5px;text-align:right;"><span class="n" style="font-size:21.80px">2.000.000.000</span></div>
<div class="c rr" style="left:1411.4499999999998px;top:762.0500000000001px;width:134.20000000000027px;height:48.999999999999886px;justify-content:flex-end;padding:0 2.5px 0 2.5px;text-align:right;"><span class="n" style="font-size:21.80px">1.599.800.000</span></div>
<div class="c rb" style="left:135.9px;top:812.75px;width:689.15px;height:34.0px;justify-content:flex-start;padding:0 4.2px 0 4.2px;text-align:left;">Loại: Phương tiện vận tải đường bộ</div>
<div class="c rb" style="left:826.75px;top:812.75px;width:92.89999999999998px;height:34.0px;justify-content:flex-end;padding:0 2.5px 0 2.5px;text-align:right;"><span class="n nb" style="font-size:21.80px">1</span></div>
<div class="c rb" style="left:921.35px;top:812.75px;width:140.0000000000001px;height:34.0px;justify-content:flex-end;padding:0 2.5px 0 2.5px;text-align:right;"><span class="n nb" style="font-size:21.80px">2.000.000.000</span></div>
<div class="c rb" style="left:1063.05px;top:812.75px;width:116.30000000000018px;height:34.0px;justify-content:flex-end;padding:0 2.5px 0 2.5px;text-align:right;"><span class="n nb" style="font-size:20.65px">1.800.000.000</span></div>
<div class="c rb" style="left:1181.05px;top:812.75px;width:92.90000000000009px;height:34.0px;justify-content:flex-end;padding:0 2.5px 0 2.5px;text-align:right;"><span class="n nb" style="font-size:21.80px">1</span></div>
<div class="c rb" style="left:1275.6499999999999px;top:812.75px;width:134.10000000000014px;height:34.0px;justify-content:flex-end;padding:0 2.5px 0 2.5px;text-align:right;"><span class="n nb" style="font-size:21.80px">2.000.000.000</span></div>
<div class="c rb" style="left:1411.4499999999998px;top:812.75px;width:134.20000000000027px;height:34.0px;justify-content:flex-end;padding:0 2.5px 0 2.5px;text-align:right;"><span class="n nb" style="font-size:21.80px">1.800.000.000</span></div>
<div class="c rd" style="left:135.9px;top:848.95px;width:57.55000000000001px;height:48.89999999999998px;justify-content:center;padding:0 4px 0 8px;text-align:center;">1</div>
<div class="c rr" style="left:195.15px;top:847.95px;width:216.49999999999997px;height:48.89999999999998px;justify-content:flex-start;padding:0 4px 0 4px;text-align:left;">TS000020</div>
<div class="c rr" style="left:484.35px;top:847.95px;width:122.29999999999995px;height:48.89999999999998px;justify-content:flex-start;padding:0 4px 0 4px;text-align:left;">TS000020</div>
<div class="c rd" style="left:608.35px;top:848.95px;width:122.29999999999995px;height:48.89999999999998px;justify-content:center;padding:0 0px 0 2.8px;text-align:center;">01/01/2025</div>
<div class="c rr" style="left:826.75px;top:848.45px;width:92.89999999999998px;height:48.89999999999998px;justify-content:flex-end;padding:0 2.5px 0 2.5px;text-align:right;"><span class="n" style="font-size:21.80px">1</span></div>
<div class="c rr" style="left:921.35px;top:848.45px;width:140.0000000000001px;height:48.89999999999998px;justify-content:flex-end;padding:0 2.5px 0 2.5px;text-align:right;"><span class="n" style="font-size:21.80px">2.000.000.000</span></div>
<div class="c rr" style="left:1063.05px;top:848.45px;width:116.30000000000018px;height:48.89999999999998px;justify-content:flex-end;padding:0 2.5px 0 2.5px;text-align:right;"><span class="n" style="font-size:21.80px">1.800.000.000</span></div>
<div class="c rr" style="left:1181.05px;top:848.45px;width:92.90000000000009px;height:48.89999999999998px;justify-content:flex-end;padding:0 2.5px 0 2.5px;text-align:right;"><span class="n" style="font-size:21.80px">1</span></div>
<div class="c rr" style="left:1275.6499999999999px;top:848.45px;width:134.10000000000014px;height:48.89999999999998px;justify-content:flex-end;padding:0 2.5px 0 2.5px;text-align:right;"><span class="n" style="font-size:21.80px">2.000.000.000</span></div>
<div class="c rr" style="left:1411.4499999999998px;top:848.45px;width:134.20000000000027px;height:48.89999999999998px;justify-content:flex-end;padding:0 2.5px 0 2.5px;text-align:right;"><span class="n" style="font-size:21.80px">1.800.000.000</span></div>
<div class="c rb" style="left:135.9px;top:899.0500000000001px;width:689.15px;height:33.799999999999955px;justify-content:flex-start;padding:0 4.2px 0 4.2px;text-align:left;">Loại: Máy vi tính để bàn</div>
<div class="c rb" style="left:826.75px;top:899.0500000000001px;width:92.89999999999998px;height:33.799999999999955px;justify-content:flex-end;padding:0 2.5px 0 2.5px;text-align:right;"><span class="n nb" style="font-size:21.80px">6</span></div>
<div class="c rb" style="left:921.35px;top:899.0500000000001px;width:140.0000000000001px;height:33.799999999999955px;justify-content:flex-end;padding:0 2.5px 0 2.5px;text-align:right;"><span class="n nb" style="font-size:21.80px">130.000.000</span></div>
<div class="c rb" style="left:1063.05px;top:899.0500000000001px;width:116.30000000000018px;height:33.799999999999955px;justify-content:flex-end;padding:0 2.5px 0 2.5px;text-align:right;"><span class="n nb" style="font-size:21.80px">54.000.000</span></div>
<div class="c rb" style="left:1181.05px;top:899.0500000000001px;width:92.90000000000009px;height:33.799999999999955px;justify-content:flex-end;padding:0 2.5px 0 2.5px;text-align:right;"><span class="n nb" style="font-size:21.80px">6</span></div>
<div class="c rb" style="left:1275.6499999999999px;top:899.0500000000001px;width:134.10000000000014px;height:33.799999999999955px;justify-content:flex-end;padding:0 2.5px 0 2.5px;text-align:right;"><span class="n nb" style="font-size:21.80px">130.000.000</span></div>
<div class="c rb" style="left:1411.4499999999998px;top:899.0500000000001px;width:134.20000000000027px;height:33.799999999999955px;justify-content:flex-end;padding:0 2.5px 0 2.5px;text-align:right;"><span class="n nb" style="font-size:21.80px">54.000.000</span></div>
<svg class="abs" style="left:0;top:0" width="1922" height="1100" viewBox="0 0 1922 1100"><path d="M135.05 453.75V497.15 M825.90 453.75V497.15 M920.50 453.75V497.15 M1062.20 453.75V497.15 M1180.20 453.75V497.15 M1274.80 453.75V497.15 M1410.60 453.75V497.15 M1546.50 453.75V497.15 M1629.10 453.75V497.15 M1711.90 453.75V497.15 M1800.30 453.75V497.15 M134.20 496.30H1801.15 M135.05 495.45V538.45 M825.90 495.45V538.45 M920.50 495.45V538.45 M1062.20 495.45V538.45 M1180.20 495.45V538.45 M1274.80 495.45V538.45 M1410.60 495.45V538.45 M1546.50 495.45V538.45 M1629.10 495.45V538.45 M1711.90 495.45V538.45 M1800.30 495.45V538.45 M134.20 537.60H1801.15 M135.05 536.75V573.55 M825.90 536.75V573.55 M920.50 536.75V573.55 M1062.20 536.75V573.55 M1180.20 536.75V573.55 M1274.80 536.75V573.55 M1410.60 536.75V573.55 M1546.50 536.75V573.55 M1629.10 536.75V573.55 M1711.90 536.75V573.55 M1800.30 536.75V573.55 M134.20 572.70H1801.15 M135.05 571.85V624.05 M194.30 571.85V624.05 M412.50 571.85V624.05 M483.50 571.85V624.05 M607.50 571.85V624.05 M731.50 571.85V624.05 M825.90 571.85V624.05 M920.50 571.85V624.05 M1062.20 571.85V624.05 M1180.20 571.85V624.05 M1274.80 571.85V624.05 M1410.60 571.85V624.05 M1546.50 571.85V624.05 M1629.10 571.85V624.05 M1711.90 571.85V624.05 M1800.30 571.85V624.05 M134.20 623.20H1801.15 M135.05 622.35V675.65 M194.30 622.35V675.65 M412.50 622.35V675.65 M483.50 622.35V675.65 M607.50 622.35V675.65 M731.50 622.35V675.65 M825.90 622.35V675.65 M920.50 622.35V675.65 M1062.20 622.35V675.65 M1180.20 622.35V675.65 M1274.80 622.35V675.65 M1410.60 622.35V675.65 M1546.50 622.35V675.65 M1629.10 622.35V675.65 M1711.90 622.35V675.65 M1800.30 622.35V675.65 M134.20 674.80H1801.15 M135.05 673.95V726.05 M194.30 673.95V726.05 M412.50 673.95V726.05 M483.50 673.95V726.05 M607.50 673.95V726.05 M731.50 673.95V726.05 M825.90 673.95V726.05 M920.50 673.95V726.05 M1062.20 673.95V726.05 M1180.20 673.95V726.05 M1274.80 673.95V726.05 M1410.60 673.95V726.05 M1546.50 673.95V726.05 M1629.10 673.95V726.05 M1711.90 673.95V726.05 M1800.30 673.95V726.05 M134.20 725.20H1801.15 M135.05 724.35V761.55 M825.90 724.35V761.55 M920.50 724.35V761.55 M1062.20 724.35V761.55 M1180.20 724.35V761.55 M1274.80 724.35V761.55 M1410.60 724.35V761.55 M1546.50 724.35V761.55 M1629.10 724.35V761.55 M1711.90 724.35V761.55 M1800.30 724.35V761.55 M134.20 760.70H1801.15 M135.05 759.85V812.25 M194.30 759.85V812.25 M412.50 759.85V812.25 M483.50 759.85V812.25 M607.50 759.85V812.25 M731.50 759.85V812.25 M825.90 759.85V812.25 M920.50 759.85V812.25 M1062.20 759.85V812.25 M1180.20 759.85V812.25 M1274.80 759.85V812.25 M1410.60 759.85V812.25 M1546.50 759.85V812.25 M1629.10 759.85V812.25 M1711.90 759.85V812.25 M1800.30 759.85V812.25 M134.20 811.40H1801.15 M135.05 810.55V847.95 M825.90 810.55V847.95 M920.50 810.55V847.95 M1062.20 810.55V847.95 M1180.20 810.55V847.95 M1274.80 810.55V847.95 M1410.60 810.55V847.95 M1546.50 810.55V847.95 M1629.10 810.55V847.95 M1711.90 810.55V847.95 M1800.30 810.55V847.95 M134.20 847.10H1801.15 M135.05 846.25V898.55 M194.30 846.25V898.55 M412.50 846.25V898.55 M483.50 846.25V898.55 M607.50 846.25V898.55 M731.50 846.25V898.55 M825.90 846.25V898.55 M920.50 846.25V898.55 M1062.20 846.25V898.55 M1180.20 846.25V898.55 M1274.80 846.25V898.55 M1410.60 846.25V898.55 M1546.50 846.25V898.55 M1629.10 846.25V898.55 M1711.90 846.25V898.55 M1800.30 846.25V898.55 M134.20 897.70H1801.15 M135.05 896.85V934.05 M825.90 896.85V934.05 M920.50 896.85V934.05 M1062.20 896.85V934.05 M1180.20 896.85V934.05 M1274.80 896.85V934.05 M1410.60 896.85V934.05 M1546.50 896.85V934.05 M1629.10 896.85V934.05 M1711.90 896.85V934.05 M1800.30 896.85V934.05 M134.20 933.20H1801.15 M135.05 932.35V984.65 M194.30 932.35V984.65 M412.50 932.35V984.65 M483.50 932.35V984.65 M607.50 932.35V984.65 M731.50 932.35V984.65 M825.90 932.35V984.65 M920.50 932.35V984.65 M1062.20 932.35V984.65 M1180.20 932.35V984.65 M1274.80 932.35V984.65 M1410.60 932.35V984.65 M1546.50 932.35V984.65 M1629.10 932.35V984.65 M1711.90 932.35V984.65 M1800.30 932.35V984.65 M134.20 983.80H1801.15 M134.20 325.10H1801.15 M482.65 360.40H732.35 M825.05 360.40H1712.75 M134.20 419.50H1801.15 M134.20 454.60H1801.15 M135.05 324.25V455.45 M194.30 324.25V455.45 M412.50 324.25V455.45 M483.50 324.25V455.45 M607.50 359.55V455.45 M731.50 324.25V455.45 M825.90 324.25V455.45 M920.50 359.55V455.45 M1062.20 359.55V455.45 M1180.20 324.25V455.45 M1274.80 359.55V455.45 M1410.60 359.55V455.45 M1546.50 324.25V455.45 M1629.10 359.55V455.45 M1711.90 324.25V455.45 M1800.30 324.25V455.45" stroke="#000" stroke-width="1.7" fill="none"/></svg>
</div></div></div>
<div class="abs" style="left:0;top:0;width:1922px;height:955px;border:1px solid #000;pointer-events:none"></div>
</body></html>
